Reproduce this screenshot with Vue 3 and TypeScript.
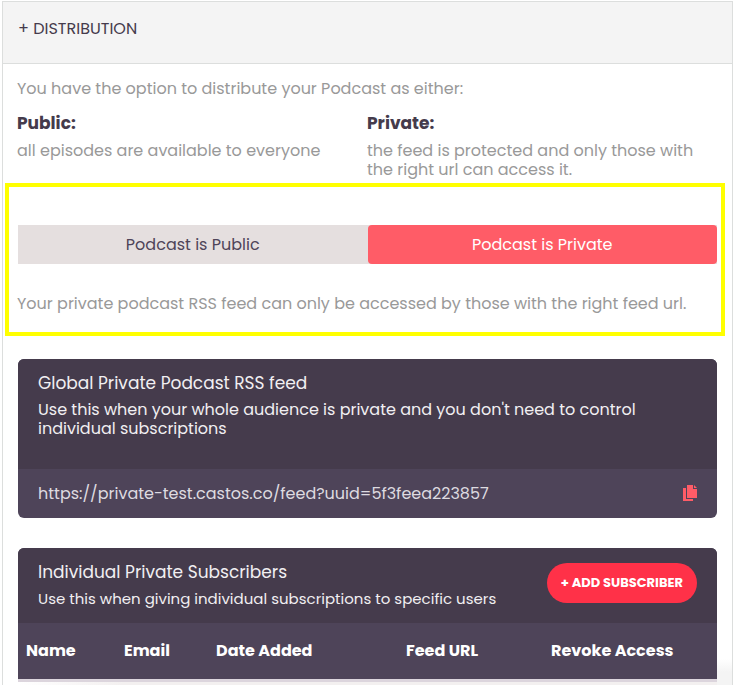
<script setup lang="ts">
import { ref } from 'vue'

type Visibility = 'public' | 'private'

const visibility = ref<Visibility>('private')
const feedUrl = 'https://private-test.castos.co/feed?uuid=5f3feea223857'
const columns: { key: string; label: string }[] = [
  { key: 'name', label: 'Name' },
  { key: 'email', label: 'Email' },
  { key: 'date', label: 'Date Added' },
  { key: 'url', label: 'Feed URL' },
  { key: 'revoke', label: 'Revoke Access' },
]

function copyFeed(): void {
  navigator.clipboard?.writeText(feedUrl)
}
</script>

<template>
  <section class="panel">
    <header class="panel-head">
      <h2>+ DISTRIBUTION</h2>
    </header>
    <div class="panel-body">
      <p>You have the option to distribute your Podcast as either:</p>
      <div class="options">
        <div>
          <h3>Public:</h3>
          <p>all episodes are available to everyone</p>
        </div>
        <div>
          <h3>Private:</h3>
          <p>the feed is protected and only those with the right url can access it.</p>
        </div>
      </div>

      <div class="highlight">
        <div class="switch">
          <button type="button" :class="{ active: visibility === 'public' }" @click="visibility = 'public'">
            Podcast is Public
          </button>
          <button type="button" :class="{ active: visibility === 'private' }" @click="visibility = 'private'">
            Podcast is Private
          </button>
        </div>
        <p class="note">Your private podcast RSS feed can only be accessed by those with the right feed url.</p>
      </div>

      <article class="card">
        <div class="card-head tall">
          <div>
            <h4>Global Private Podcast RSS feed</h4>
            <p>Use this when your whole audience is private and you don't need to control individual subscriptions</p>
          </div>
        </div>
        <div class="feed">
          <span>{{ feedUrl }}</span>
          <button type="button" class="copy" title="Copy" @click="copyFeed">
            <svg viewBox="0 0 14 17" width="14" height="17" aria-hidden="true">
              <path d="M0 3h3v11h7v2H0z" />
              <path d="M4 0h6v4h4v9H4z" />
              <path d="M11 0l3 3h-3z" />
            </svg>
          </button>
        </div>
      </article>

      <article class="card subscribers">
        <div class="card-head">
          <div>
            <h4>Individual Private Subscribers</h4>
            <p class="compact">Use this when giving individual subscriptions to specific users</p>
          </div>
          <button type="button" class="add">+ ADD SUBSCRIBER</button>
        </div>
        <table>
          <thead>
            <tr>
              <th v-for="c in columns" :key="c.key" :class="c.key" scope="col">{{ c.label }}</th>
            </tr>
          </thead>
        </table>
        <div class="table-end"></div>
      </article>
    </div>
  </section>
</template>

<style>
body {
  background: #fff;
  overflow: hidden;
}
</style>

<style scoped>
.panel {
  margin: 1px 0 0 2px;
  border: 1px solid #dcdedd;
  border-bottom: 0;
  font-family: Poppins, Inter, "Noto Sans", sans-serif;
  font-size: 16px;
  line-height: 19px;
  color: #999;
}
h2, h3, h4, p {
  margin: 0;
  font-weight: 400;
}
button {
  border: 0;
  font: inherit;
  cursor: pointer;
}
.panel-head {
  padding: 17px 15px 25px;
  background: #f4f4f4;
  border-bottom: 1px solid #dcdedd;
}
h2 {
  font-size: 16px;
  line-height: 19px;
  color: #453b4c;
}
.panel-body {
  padding: 15px 15px 0 14px;
  background: linear-gradient(#fff, #f4f4f4 50%) right bottom / 15px 26px no-repeat;
}
.options {
  display: grid;
  grid-template-columns: 1fr 1fr;
  margin-top: 15px;
}
h3 {
  margin-bottom: 8px;
  font-size: 17px;
  line-height: 20px;
  font-weight: 700;
  color: #453b4c;
}
.highlight {
  margin: 4px -8px 0 -12px;
  padding: 38px 4px 19px 8px;
  border: 4px solid #ff0;
}
.switch {
  display: grid;
  grid-template-columns: 1fr 1fr;
  margin-left: 1px;
  background: #e5dfdf;
}
.switch button {
  padding: 10px;
  background: transparent;
  color: #4e4459;
}
.switch button.active {
  border-radius: 4px;
  background: #ff5c67;
  color: #fff;
}
.note {
  margin-top: 30px;
}
.card {
  margin: 23px 0 0 1px;
  border-radius: 6px;
  overflow: hidden;
  background: #4e4459;
  color: #f1eff2;
}
.card-head {
  display: flex;
  align-items: flex-start;
  justify-content: space-between;
  padding: 14px 20px 15px;
  background: #453b4c;
}
.card-head.tall {
  padding-bottom: 31px;
}
h4 {
  margin-bottom: 7px;
  font-size: 17px;
  line-height: 20px;
}
.compact {
  font-size: 15px;
}
.feed {
  display: flex;
  align-items: center;
  justify-content: space-between;
  padding: 15px 20px;
  color: #dedbe0;
}
.copy {
  display: flex;
  padding: 0;
  background: none;
}
.copy svg {
  fill: #ff5c67;
}
.subscribers {
  margin-top: 30px;
  border-radius: 6px 6px 0 0;
}
.add {
  margin-top: 1px;
  padding: 0 14px;
  border-radius: 20px;
  background: #ff3148;
  color: #fff;
  font-size: 13px;
  line-height: 40px;
  font-weight: 700;
  white-space: nowrap;
}
table {
  width: 100%;
  border-collapse: collapse;
  table-layout: fixed;
}
th {
  box-sizing: border-box;
  padding: 18px 8px 19px;
  text-align: left;
  color: #fff;
  font-weight: 700;
  white-space: nowrap;
}
.name { width: 98px; }
.email { width: 92px; }
.date { width: 190px; }
.url { width: 145px; }
.table-end {
  height: 3px;
  border-top: 3px solid #dcd5dd;
  background: linear-gradient(90deg, #fff, #f3f0f0 15%);
}
</style>
